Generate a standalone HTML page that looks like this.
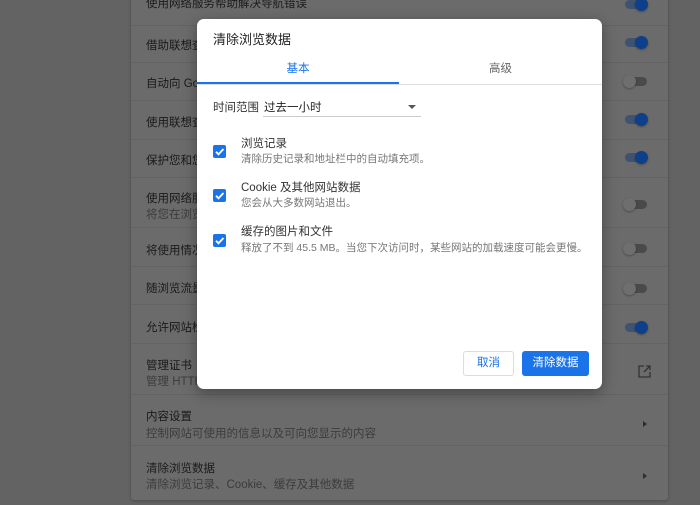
<!DOCTYPE html>
<html><head><meta charset="utf-8"><style>
html,body{margin:0;}
body{width:700px;height:505px;background:#636363;position:relative;overflow:hidden;font-family:"Liberation Sans","Noto Sans CJK SC",sans-serif;}
.bg{position:absolute;left:0;top:0;width:700px;height:505px;background:#636363}
.card{position:absolute;left:131px;top:-5px;width:537px;height:505px;background:#6b6b6b;border-radius:0 0 3px 3px;box-shadow:0 1px 3px rgba(0,0,0,.25);}
.row{position:absolute;left:0;width:537px;border-top:1px solid #636363;}
.t{position:absolute;left:15px;font-size:11.5px;color:#1a1a1a;white-space:nowrap}
.s{position:absolute;left:15px;font-size:11.5px;color:#3c3c3c;white-space:nowrap}
.tg{position:absolute;left:494px;width:22px;height:9px;border-radius:5px;background:#4a4a4a;}
.tg i{position:absolute;top:-2.5px;left:-2px;width:13px;height:13px;border-radius:50%;background:#6e6e6e;box-shadow:0 1px 2px rgba(0,0,0,.3)}
.tg.on{background:#3f5270}.tg.on i{left:10px;background:#0d3f8a}
.arr{position:absolute;left:512px;width:0;height:0;border-top:3.5px solid transparent;border-bottom:3.5px solid transparent;border-left:4px solid #2e2e2e}
.dlg{position:absolute;left:197px;top:19px;width:405px;height:370px;background:#fff;border-radius:7px;box-shadow:0 4px 14px rgba(0,0,0,.35);}
.cb{position:absolute;left:16px;width:13px;height:13px;background:#1a73e8;border-radius:2px}
.lbl{position:absolute;left:44px;font-size:11.5px;color:#333;white-space:nowrap}
.sub{position:absolute;left:44px;font-size:10.5px;color:#777;white-space:nowrap}
</style></head><body>
<div class="bg"></div>
<div class="card">
 <div class="t" style="top:0px">使用网络服务帮助解决导航错误</div><div class="tg on" style="top:5px"><i></i></div>
 <div class="row" style="top:30px"></div>
 <div class="t" style="top:42px">借助联想查询服务</div><div class="tg on" style="top:43px"><i></i></div>
 <div class="row" style="top:67px"></div>
 <div class="t" style="top:80px">自动向 Google</div><div class="tg" style="top:82px"><i></i></div>
 <div class="row" style="top:105px"></div>
 <div class="t" style="top:119px">使用联想查询服务</div><div class="tg on" style="top:120px"><i></i></div>
 <div class="row" style="top:144px"></div>
 <div class="t" style="top:157px">保护您和您的设备</div><div class="tg on" style="top:158px"><i></i></div>
 <div class="row" style="top:182px"></div>
 <div class="t" style="top:195px">使用网络服务</div><div class="s" style="top:211px">将您在浏览</div><div class="tg" style="top:205px"><i></i></div>
 <div class="row" style="top:232px"></div>
 <div class="t" style="top:247px">将使用情况</div><div class="tg" style="top:249px"><i></i></div>
 <div class="row" style="top:271px"></div>
 <div class="t" style="top:285px">随浏览流量</div><div class="tg" style="top:289px"><i></i></div>
 <div class="row" style="top:309px"></div>
 <div class="t" style="top:324px">允许网站检</div><div class="tg on" style="top:328px"><i></i></div>
 <div class="row" style="top:348px"></div>
 <div class="t" style="top:362px">管理证书</div><div class="s" style="top:378px">管理 HTTPS</div>
 <svg style="position:absolute;left:507px;top:370px" width="13" height="13" viewBox="0 0 13 13" fill="none" stroke="#333" stroke-width="1.3"><path d="M6 1H1v11h11V7M8 1h4v4M12 1L6 7"/></svg>
 <div class="row" style="top:399px"></div>
 <div class="t" style="top:413px">内容设置</div><div class="s" style="top:430px">控制网站可使用的信息以及可向您显示的内容</div><div class="arr" style="top:426px"></div>
 <div class="row" style="top:450px"></div>
 <div class="t" style="top:465px">清除浏览数据</div><div class="s" style="top:481px">清除浏览记录、Cookie、缓存及其他数据</div><div class="arr" style="top:478px"></div>
</div>
<div class="dlg">
 <div style="position:absolute;left:16px;top:10px;font-size:13px;color:#222">清除浏览数据</div>
 <div style="position:absolute;left:0;width:202px;top:41px;text-align:center;font-size:11.5px;color:#1a73e8">基本</div>
 <div style="position:absolute;left:202px;width:203px;top:41px;text-align:center;font-size:11.5px;color:#666">高级</div>
 <div style="position:absolute;left:0;top:65px;width:405px;height:1px;background:#ddd"></div>
 <div style="position:absolute;left:0;top:63px;width:202px;height:2px;background:#1a73e8"></div>
 <div style="position:absolute;left:16px;top:80px;font-size:11.5px;color:#333">时间范围</div>
 <div style="position:absolute;left:67px;top:80px;font-size:11.5px;color:#222">过去一小时</div>
 <div style="position:absolute;left:66px;top:97px;width:158px;height:1px;background:#ccc"></div>
 <div style="position:absolute;left:211px;top:86px;border-left:4px solid transparent;border-right:4px solid transparent;border-top:4px solid #555"></div>
 <div class="cb" style="top:126px"></div><div class="lbl" style="top:116px">浏览记录</div><div class="sub" style="top:132px">清除历史记录和地址栏中的自动填充项。</div>
 <div class="cb" style="top:170px"></div><div class="lbl" style="top:160px">Cookie 及其他网站数据</div><div class="sub" style="top:176px">您会从大多数网站退出。</div>
 <div class="cb" style="top:215px"></div><div class="lbl" style="top:204px">缓存的图片和文件</div><div class="sub" style="top:221px">释放了不到 45.5 MB。当您下次访问时，某些网站的加载速度可能会更慢。</div>
 <svg style="position:absolute;left:16px;top:126px" width="13" height="150"><g fill="none" stroke="#fff" stroke-width="1.8"><path d="M3 6.8l2.5 2.5L10.5 4"/><path d="M3 50.8l2.5 2.5L10.5 48"/><path d="M3 95.8l2.5 2.5L10.5 93"/></g></svg>
 <div style="position:absolute;left:266px;top:332px;width:51px;height:25px;border:1px solid #dadce0;border-radius:3px;box-sizing:border-box;font-size:11.5px;color:#1a73e8;text-align:center;line-height:23px">取消</div>
 <div style="position:absolute;left:325px;top:332px;width:67px;height:25px;background:#1a73e8;border-radius:3px;font-size:11.5px;color:#fff;text-align:center;line-height:25px">清除数据</div>
</div>
</body></html>
